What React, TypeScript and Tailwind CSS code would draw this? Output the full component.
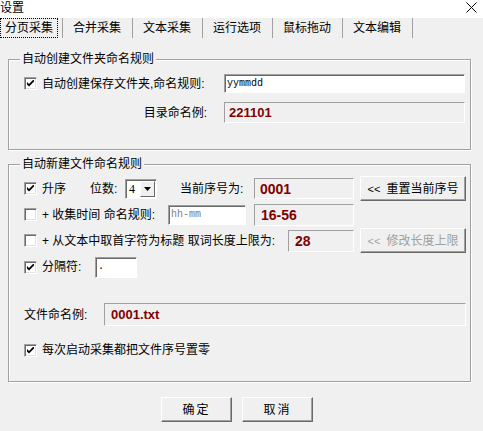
import { ReactNode } from "react";

const tabs = ["合并采集", "文本采集", "运行选项", "鼠标拖动", "文本编辑"];

function CheckBox({ checked }: { checked?: boolean }) {
  return (
    <span className="flex h-[13px] w-[13px] shrink-0 items-center justify-center border border-t-[#a0a0a0] border-l-[#a0a0a0] border-b-white border-r-white bg-white shadow-[inset_1px_1px_0_#696969,inset_-1px_-1px_0_#e3e3e3]">
      {checked && (
        <svg width="7" height="7" viewBox="0 0 7 7">
          <path d="M0 2 L2 4 L7 -1 L7 1.5 L2 6.5 L0 4.5 Z" fill="#000" />
        </svg>
      )}
    </span>
  );
}

function Field({ children, className = "" }: { children?: ReactNode; className?: string }) {
  return (
    <div
      className={`flex items-center border border-t-[#a0a0a0] border-l-[#a0a0a0] border-b-white border-r-white bg-white pl-[2px] font-['Liberation_Mono',monospace] text-[10px] shadow-[inset_1px_1px_0_#696969] ${className}`}
    >
      {children}
    </div>
  );
}

function Output({ children, className = "" }: { children: ReactNode; className?: string }) {
  return (
    <div
      className={`flex items-center border border-t-[#a0a0a0] border-l-[#a0a0a0] border-b-white border-r-white bg-[#f0f0f0] font-['Liberation_Sans',sans-serif] font-bold text-[#800000] ${className}`}
    >
      {children}
    </div>
  );
}

function Button({
  children,
  className = "",
  disabled,
}: {
  children: ReactNode;
  className?: string;
  disabled?: boolean;
}) {
  return (
    <div
      className={`flex items-center justify-center border border-t-white border-l-white border-b-[#696969] border-r-[#696969] bg-[#f0f0f0] shadow-[inset_-1px_-1px_0_#a0a0a0] ${
        disabled ? "text-[#a0a0a0]" : "text-black"
      } ${className}`}
    >
      {children}
    </div>
  );
}

function Group({ title, className, children }: { title: string; className: string; children: ReactNode }) {
  return (
    <fieldset
      className={`mx-[8px] w-[463px] border border-[#a0a0a0] shadow-[1px_1px_0_#fff,inset_1px_1px_0_#fff] ${className}`}
    >
      <legend className="ml-[11px] bg-[#f0f0f0] px-[2px]">{title}</legend>
      <div className="pl-[15px]">{children}</div>
    </fieldset>
  );
}

export default function App() {
  return (
    <div className="h-[431px] w-[483px] overflow-hidden bg-[#f0f0f0] font-['Liberation_Sans','Noto_Sans_CJK_SC',sans-serif] text-[12px] leading-[14px] text-black">
      {/* title bar */}
      <div className="flex h-[18px] items-start justify-between bg-white">
        <span className="mt-[1px]">设置</span>
        <svg className="mr-[6px] mt-[2px]" width="11" height="11" viewBox="0 0 11 11">
          <path d="M0.5 0.5 L10.5 10.5 M10.5 0.5 L0.5 10.5" stroke="#000" strokeWidth="1" />
        </svg>
      </div>

      {/* tabs */}
      <div className="flex h-[20px]">
        <div className="h-full w-[62px]">
          <div className="flex h-full w-[58px] items-center justify-center border border-dotted border-black">
            分页采集
          </div>
        </div>
        {tabs.map((t) => (
          <div key={t} className="flex h-full w-[70px] items-center border-l border-[#a0a0a0] pl-[10px]">
            {t}
          </div>
        ))}
        <div className="h-full border-l border-[#a0a0a0]" />
      </div>

      <Group title="自动创建文件夹命名规则" className="mt-[14px] h-[98px]">
        <div className="pt-[8px]">
          <div className="flex h-[19px] items-center">
            <div className="flex w-[183px] items-center gap-[5px]">
              <CheckBox checked />
              <span>自动创建保存文件夹,命名规则:</span>
            </div>
            <Field className="ml-[17px] h-[19px] w-[241px]">yymmdd</Field>
          </div>
          <div className="mt-[9px] flex h-[21px] items-center">
            <div className="w-[183px] text-right">目录命名例:</div>
            <Output className="ml-[17px] h-[21px] w-[241px] pl-[4px] text-[13px]">221101</Output>
          </div>
        </div>
      </Group>

      <Group title="自动新建文件命名规则" className="mt-[7px] h-[225px]">
        <div className="pt-[5px]">
          <div className="flex h-[25px] items-center">
            <CheckBox checked />
            <span className="ml-[5px] w-[48px]">升序</span>
            <span className="w-[35px]">位数:</span>
            <div className="flex h-[20px] w-[32px] items-center border border-t-[#a0a0a0] border-l-[#a0a0a0] border-b-white border-r-white bg-white shadow-[inset_1px_1px_0_#696969]">
              <span className="ml-[3px] flex-1 font-['Liberation_Serif',serif] text-[12px]">4</span>
              <div className="mr-[1px] flex h-[16px] w-[15px] items-center justify-center border border-t-white border-l-white border-b-[#696969] border-r-[#696969] bg-[#f0f0f0]">
                <svg width="7" height="4" viewBox="0 0 7 4">
                  <path d="M0 0 L7 0 L3.5 4 Z" fill="#000" />
                </svg>
              </div>
            </div>
            <span className="ml-[23px] w-[74px]">当前序号为:</span>
            <Output className="h-[21px] w-[100px] pl-[5px] text-[14px]">0001</Output>
            <Button className="ml-[6px] h-[25px] w-[106px]">
              <span className="mr-[6px] text-[11px]">&lt;&lt;</span>重置当前序号
            </Button>
          </div>

          <div className="mt-[2px] flex h-[23px] items-center">
            <CheckBox />
            <span className="ml-[5px] w-[126px]">+ 收集时间 命名规则:</span>
            <Field className="h-[20px] w-[78px] text-[#808080]">hh-mm</Field>
            <Output className="ml-[8px] h-[22px] w-[100px] pl-[6px] text-[14px]">16-56</Output>
          </div>

          <div className="mt-[2px] flex h-[25px] items-center">
            <CheckBox />
            <span className="ml-[5px] w-[246px]">+ 从文本中取首字符为标题 取词长度上限为:</span>
            <Output className="h-[22px] w-[66px] pl-[6px] text-[14px]">28</Output>
            <Button disabled className="ml-[6px] h-[25px] w-[106px]">
              <span className="mr-[6px] text-[11px]">&lt;&lt;</span>修改长度上限
            </Button>
          </div>

          <div className="mt-[3px] flex h-[22px] items-center">
            <CheckBox checked />
            <span className="ml-[5px] w-[53px]">分隔符:</span>
            <Field className="h-[21px] w-[42px]">.</Field>
          </div>

          <div className="mt-[25px] flex h-[23px] items-center">
            <span className="w-[80px]">文件命名例:</span>
            <Output className="h-[23px] w-[362px] pl-[6px] text-[13px]">0001.txt</Output>
          </div>

          <div className="mt-[17px] flex h-[14px] items-center">
            <CheckBox checked />
            <span className="ml-[5px]">每次启动采集都把文件序号置零</span>
          </div>
        </div>
      </Group>

      <div className="ml-[161px] mt-[15px] flex gap-[10px]">
        <Button className="h-[25px] w-[71px] tracking-[2px]">确定</Button>
        <Button className="h-[25px] w-[71px] tracking-[2px]">取消</Button>
      </div>
    </div>
  );
}
